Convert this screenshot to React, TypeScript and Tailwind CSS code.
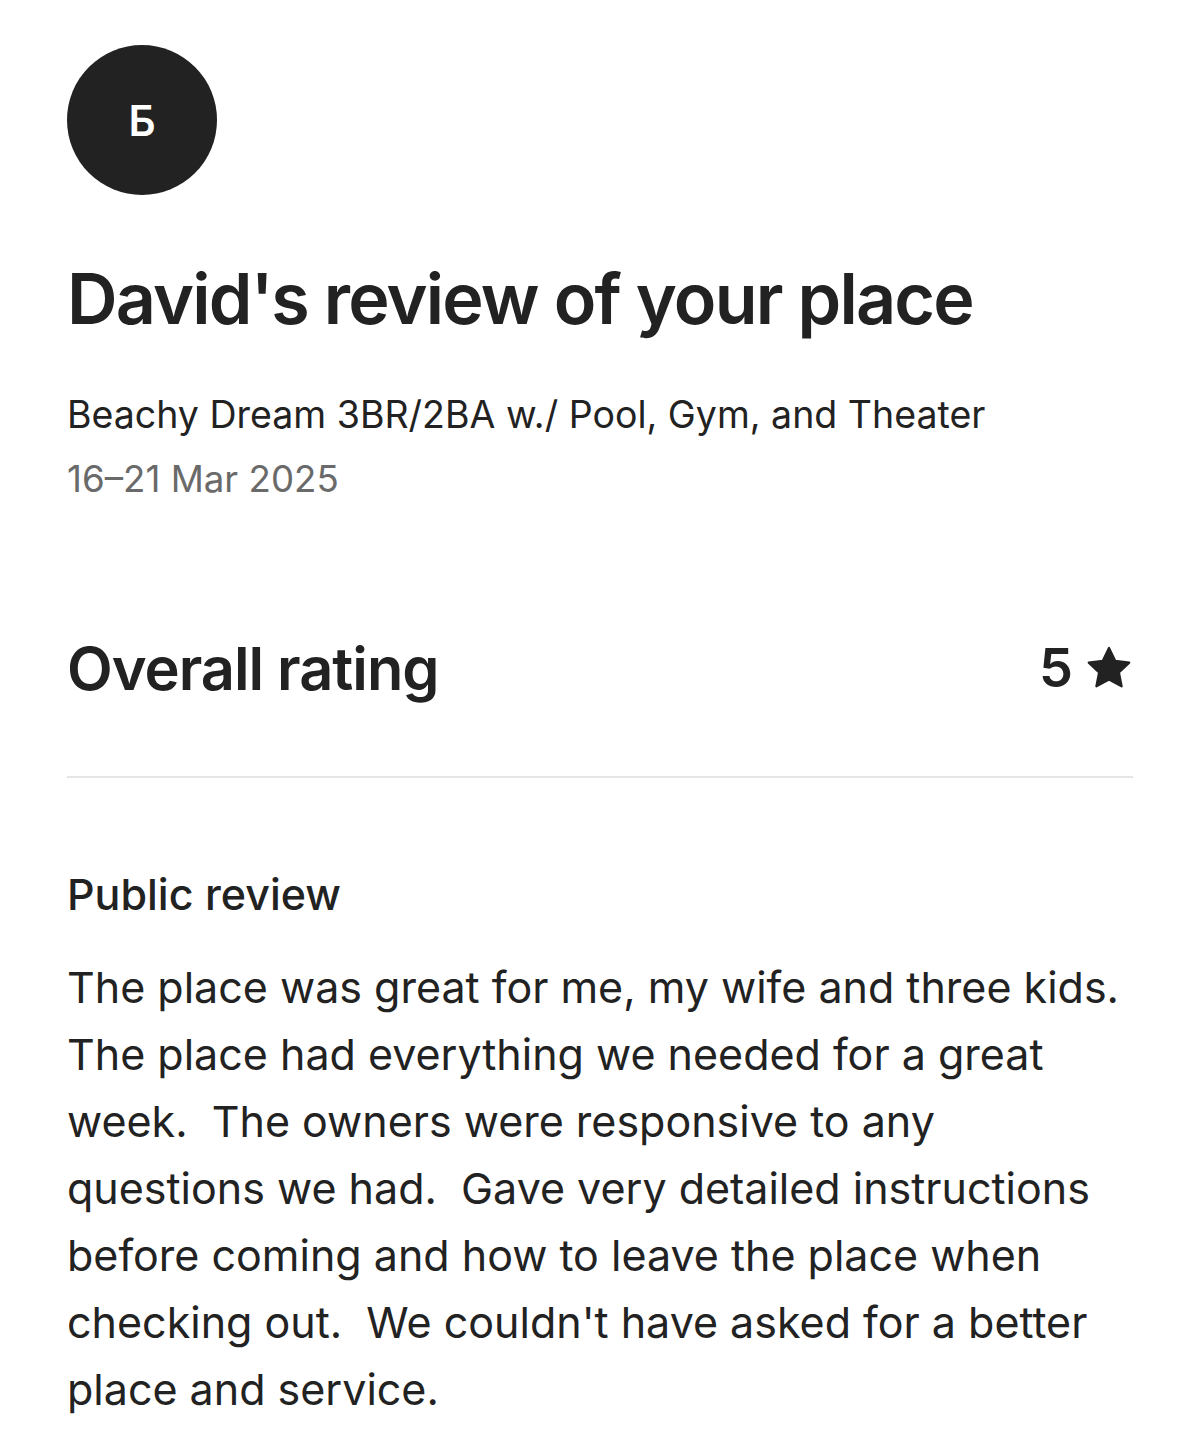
import React from "react";

function Star() {
  return (
    <svg viewBox="0 0 32 32" className="w-[48px] h-[48px]" fill="#222222" aria-hidden>
      <path d="M16 2.6l4.1 8.6 9.4 1.2-6.9 6.5 1.8 9.3L16 23.6l-8.4 4.6 1.8-9.3-6.9-6.5 9.4-1.2z" strokeLinejoin="round" stroke="#222222" strokeWidth="1.5" />
    </svg>
  );
}

const reviewLines = [
  "The place was great for me, my wife and three kids.",
  "The place had everything we needed for a great",
  "week.\u00a0 The owners were responsive to any",
  "questions we had.\u00a0 Gave very detailed instructions",
  "before coming and how to leave the place when",
  "checking out.\u00a0 We couldn't have asked for a better",
  "place and service.",
];

export default function App() {
  return (
    <div
      className="w-[1200px] min-h-[1455px] bg-white text-[#222222] px-[67px] pt-[45px]"
      style={{ fontFamily: "Inter, 'Noto Sans', sans-serif" }}
    >
      <div className="w-[150px] h-[150px] rounded-full bg-[#222222] flex items-center justify-center text-white text-[42px] font-semibold">
        Б
      </div>

      <h1 className="mt-[62px] text-[70px] leading-[84px] font-semibold tracking-[-1.8px]">
        David's review of your place
      </h1>

      <div className="mt-[50px] text-[37.5px] leading-[48px]">
        Beachy Dream 3BR/2BA w./ Pool, Gym, and Theater
      </div>
      <div className="mt-[16px] text-[36.7px] leading-[48px] text-[#6a6a6a]">16–21 Mar 2025</div>

      <div className="mt-[130px] flex items-center justify-between">
        <div className="text-[59.5px] leading-[70px] font-semibold tracking-[-1px]">Overall rating</div>
        <div className="flex items-center gap-[12px] text-[54px] leading-[70px] font-semibold">
          <span>5</span>
          <Star />
        </div>
      </div>

      <div className="mt-[73px] h-[2px] bg-[#e5e5e5]" />

      <div className="mt-[90px] text-[43px] leading-[52px] font-medium">Public review</div>

      <p className="mt-[34px] text-[43px] leading-[67px]">
        {reviewLines.map((line, i) => (
          <span key={i} className="block whitespace-nowrap">
            {line}
          </span>
        ))}
      </p>
    </div>
  );
}
